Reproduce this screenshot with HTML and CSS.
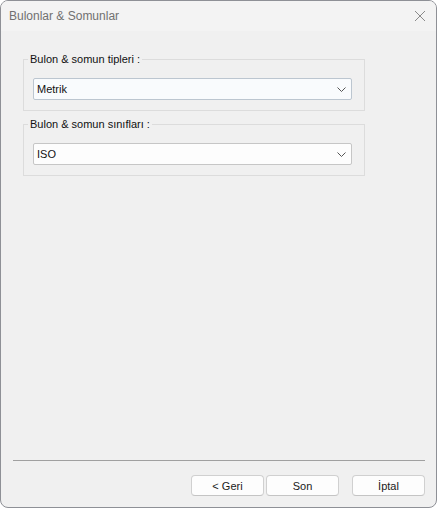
FILE: index.html
```html
<!DOCTYPE html>
<html lang="tr">
<head>
<meta charset="utf-8">
<title>Bulonlar &amp; Somunlar</title>
<link rel="stylesheet" href="styles.css">
</head>
<body>
<div class="window">
  <div class="titlebar">
    <span class="title">Bulonlar &amp; Somunlar</span>
    <span class="close">
      <svg width="12" height="12" viewBox="0 0 12 12"><path d="M1 1 L11 11 M11 1 L1 11" stroke="#8a8a8a" stroke-width="1" fill="none"/></svg>
    </span>
  </div>
  <div class="content">
    <fieldset class="group">
      <legend>Bulon &amp; somun tipleri :</legend>
      <div class="combo combo-focus">
        <span>Metrik</span>
        <svg class="chev" width="9" height="5" viewBox="0 0 9 5"><path d="M0.5 0.5 L4.5 4.5 L8.5 0.5" stroke="#555" stroke-width="1" fill="none"/></svg>
      </div>
    </fieldset>
    <fieldset class="group">
      <legend>Bulon &amp; somun sınıfları :</legend>
      <div class="combo">
        <span>ISO</span>
        <svg class="chev" width="9" height="5" viewBox="0 0 9 5"><path d="M0.5 0.5 L4.5 4.5 L8.5 0.5" stroke="#555" stroke-width="1" fill="none"/></svg>
      </div>
    </fieldset>
    <div class="spacer"></div>
    <div class="separator"></div>
    <div class="buttons">
      <button class="btn">&lt; Geri</button>
      <button class="btn">Son</button>
      <button class="btn btn-cancel">İptal</button>
    </div>
  </div>
</div>
</body>
</html>
```

FILE: styles.css
```css
html, body {
  margin: 0;
  padding: 0;
  background: #ffffff;
}
body {
  font-family: "Liberation Sans", Arial, sans-serif;
  font-size: 11px;
  color: #1a1a1a;
}
.window {
  box-sizing: border-box;
  width: 437px;
  height: 508px;
  border: 1px solid #8e9096;
  border-radius: 8px;
  overflow: hidden;
  background: #f0f0f0;
  display: flex;
  flex-direction: column;
}
.titlebar {
  height: 30px;
  flex: none;
  background: #f3f3f3;
  display: flex;
  align-items: center;
  justify-content: space-between;
  padding: 0 10px 0 8px;
}
.title {
  color: #707070;
  font-size: 12px;
}
.close {
  display: flex;
  align-items: center;
}
.content {
  flex: 1;
  display: flex;
  flex-direction: column;
  padding: 21px 11px 11px 22px;
}
.group {
  margin: 0 60px 6px 0;
  padding: 11px 12px 10px 9px;
  border: 1px solid #dcdcdc;
  min-width: 0;
}
.group legend {
  padding: 0 2px;
  margin-left: -5px;
  line-height: 15px;
  color: #111;
}
.combo {
  box-sizing: border-box;
  height: 22px;
  border: 1px solid #c6c6c6;
  border-radius: 2px;
  background: #fdfdfd;
  display: flex;
  align-items: center;
  justify-content: space-between;
  padding: 0 5px 0 3px;
  color: #111;
}
.combo-focus {
  background: #f9fbfd;
  border-color: #bcc6d0;
}
.chev {
  display: block;
}
.spacer {
  flex: 1;
}
.separator {
  height: 1px;
  background: #a0a0a0;
  margin: 0 0 14px -10px;
}
.buttons {
  display: flex;
  justify-content: flex-end;
  gap: 2px;
}
.btn {
  box-sizing: border-box;
  width: 73px;
  height: 21px;
  border: 1px solid #d0d0d0;
  border-bottom-color: #c4c4c4;
  border-radius: 4px;
  background: #fdfdfd;
  font-family: inherit;
  font-size: 11px;
  color: #1a1a1a;
  padding: 0;
}
.btn-cancel {
  margin-left: 11px;
}
```
